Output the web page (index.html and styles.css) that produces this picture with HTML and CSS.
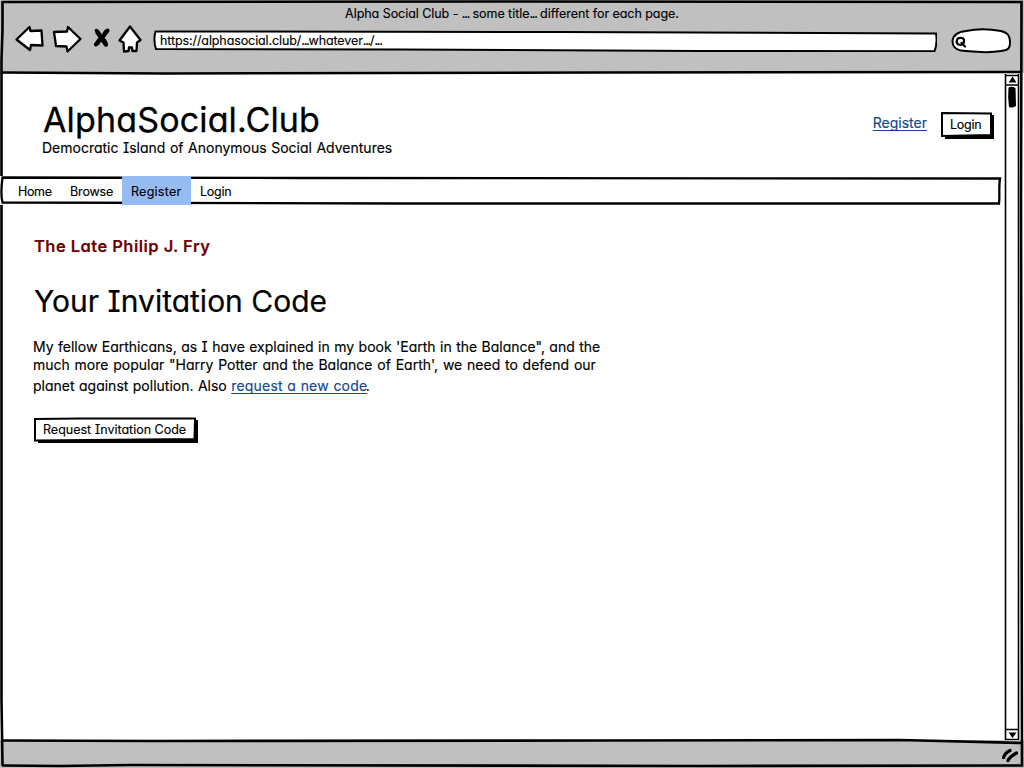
FILE: index.html
```html
<!DOCTYPE html>
<html lang="en">
<head>
<meta charset="utf-8">
<title>Alpha Social Club</title>
<link rel="stylesheet" href="styles.css">
</head>
<body>
<div class="window">
  <header class="chrome">
    <div class="window-title">Alpha Social Club - <span class="dots">...</span> some title<span class="dots">...</span> different for each page.</div>
    <div class="toolbar">
      <svg class="tools" width="130" height="34" viewBox="14 22 130 34">
        <g fill="#fff" stroke="#000" stroke-width="2.300" stroke-linejoin="round">
          <path d="M16.500 37.500 L29.500 25 L30.500 29 L41.500 28.500 L42.500 43.500 L31 43 L30 48 Z"/>
          <path d="M54 30 L67 29.500 L68 25 L80.500 37 L67.500 49.500 L66.500 44.500 L56 44 Z"/>
          <path d="M130 24.500 L140.500 38 L137 40.500 L136.500 49 L132.500 49 L132 45.500 L129 45.500 L128.500 49 L124 49.500 L123.500 40.500 L119.500 38.500 Z"/>
        </g>
        <path d="M94.500 28 Q96.500 25 99.500 29 L102 32.500 Q104 27 108 26.500 Q110.500 27.500 109 30 L104.500 36 Q108 39 108 43.500 Q106 46.500 103.500 43 L101 39.500 Q99 44.500 95 44.500 Q93 43 94.500 41 L98.500 35.500 Q95 32 94.500 28 Z"/>
      </svg>
      <div class="address">
        <svg class="outline" width="784" height="22" viewBox="153 30 784 22"><path d="M155.500 31.500 L560 32 L936 33.500 C937 39 936.500 46 934.500 51.200 L700 51 L400 49.500 L156 49 C154 44 154 36 155.500 31.500 Z" fill="#fff" stroke="#000" stroke-width="2"/></svg>
        <span class="t">https://alphasocial.club/<span class="dots">...</span>whatever<span class="dots">...</span>/<span class="dots">...</span></span>
      </div>
      <svg class="search" width="62" height="28" viewBox="950 27 62 28">
        <path d="M966 31 C977 28.500 991 29 1001 31 C1008 33 1010 36 1010 42 C1010 49 1008 50 1001 51 C990 53 976 52 966 51 C957 51 952.500 47 952.500 41 C953 35 957 32 966 31 Z" fill="#fff" stroke="#000" stroke-width="2"/>
        <path d="M957 40 C957.500 37.500 963.500 37 964 40 C964.500 44.500 961 45.500 958.500 44.500 C956.500 43.500 956.500 41.500 957 40 Z M961.500 43 L965 46.500" fill="none" stroke="#000" stroke-width="2.200" stroke-linecap="round"/>
      </svg>
    </div>
  </header>
  <div class="viewport">
    <main class="page">
      <div class="masthead">
        <div class="brand">
          <div class="logo">AlphaSocial.Club</div>
          <div class="tagline">Democratic Island of Anonymous Social Adventures</div>
        </div>
        <div class="account">
          <a class="link account-register">Register</a>
          <button class="button login">
            <svg class="outline" width="54" height="28" viewBox="940 111 54 28"><path d="M944 115 H994 V139 H945 V136 H944 Z"/><path d="M942 113 L991 113.500 L991 135 L942 136 Z" fill="#fff" stroke="#000" stroke-width="2"/></svg>
            <span class="t">Login</span>
          </button>
        </div>
      </div>
      <nav class="menu">
        <svg class="outline" width="1002" height="29" viewBox="0 176 1002 29"><path d="M2.500 177.500 L300 178 L1000 178.500 C998.500 187 1000 196 999 203.500 L400 203.500 L2.500 202.500 C0.500 195 1.500 185 2.500 177.500 Z" fill="#fff" stroke="#000" stroke-width="2.300"/></svg>
        <a class="item home">Home</a>
        <a class="item browse">Browse</a>
        <a class="item active">Register</a>
        <a class="item last">Login</a>
      </nav>
      <section class="content">
        <h2 class="eyebrow">The Late Philip J. Fry</h2>
        <h1 class="heading">Your Invitation Code</h1>
        <p class="copy">
          <span class="line one">My fellow Earthicans, as I have explained in my book 'Earth in the Balance", and the</span>
          <span class="line two">much more popular "Harry Potter and the Balance of Earth', we need to defend our</span>
          <span class="line three">planet against pollution. Also <a class="link">request a new code</a><span class="stop">.</span></span>
        </p>
        <button class="button request">
          <svg class="outline" width="166" height="28" viewBox="33 416 166 28"><path d="M38 420 H198 V443 H38 Z"/><path d="M35 419 L80 418.500 L195 418.500 L194.500 439 L35 440.500 Z" fill="#fff" stroke="#000" stroke-width="2"/></svg>
          <span class="t">Request Invitation Code</span>
        </button>
      </section>
    </main>
    <svg class="scrollbar" width="20" height="667" viewBox="1004 73 20 667">
      <path d="M1005.500 74 V740 M1018.500 74 V740 M1005 85 H1019 M1005 729.500 H1019 M1005 75.500 H1019 M1005 739.500 H1019" stroke="#000" stroke-width="1.600"/>
      <path d="M1008.500 82.500 L1012.500 76.500 L1016.500 82.500 Z M1008.500 732.500 H1016.500 L1012.500 738 Z"/>
      <path d="M1008.500 87.500 Q1012 86 1015.500 88 L1016 106 Q1012 108.500 1009 107 Q1007.500 97 1008.500 87.500 Z"/>
    </svg>
  </div>
  <footer class="status">
    <svg class="grip" width="18" height="16" viewBox="1002 747 18 16"><path d="M1003.500 757.500 Q1005 753 1010 750.500 M1008 760.500 Q1010 756.500 1016.500 753" fill="none" stroke="#000" stroke-width="3.200" stroke-linecap="round"/></svg>
  </footer>
  <svg class="frame" width="1024" height="768" viewBox="0 0 1024 768">
    <g fill="none" stroke="#000" stroke-width="2.600">
      <path d="M2.500 2 L500 1.500 L1021.500 2 L1021 200 L1022 765.500 L700 766 L130 765 L60 766 L2 765.500"/>
      <path d="M2.500 1 L2.500 30 L1.500 60 L1.500 176 M1.500 205 L1.500 310 L1.500 700 L2.500 766"/>
      <path d="M2 72.500 L165 73.500 L600 72.500 L1021 72"/>
      <path d="M2 740.500 L150 741 L600 740.500 L900 740 L1022 743"/>
    </g>
  </svg>
</div>
</body>
</html>
```
FILE: styles.css
```css
* { box-sizing: border-box; }
body {
  margin: 0;
  font-family: Inter, "Noto Sans", sans-serif;
  font-feature-settings: "cv11", "cv08", "calt" 0;
  font-size: 13px;
  color: #000;
  background: #fff;
  -webkit-text-stroke: 0.15px;
}
.window { position: relative; display: flex; flex-direction: column; width: 1024px; height: 768px; overflow: hidden; }
.frame { position: absolute; inset: 0; pointer-events: none; }
.chrome { height: 73px; background: #c0c0c0; }
.window-title { height: 26px; line-height: 27px; font-size: 12.500px; letter-spacing: -0.050px; text-align: center; white-space: pre; }
.dots { letter-spacing: -1.200px; }
.toolbar { display: flex; align-items: center; height: 30px; padding-left: 14px; }
.address { position: relative; width: 784px; height: 22px; margin-left: 9px; padding-left: 7px; line-height: 22px; font-size: 12.500px; letter-spacing: -0.100px; }
.search { margin-left: 13px; }
.outline { position: absolute; left: 0; top: 0; }
.t { position: relative; white-space: pre; }
.viewport { display: flex; height: 667px; }
.page { width: 1004px; }
.masthead { display: flex; justify-content: space-between; height: 103px; }
.brand { padding: 26px 0 0 42px; }
.logo { height: 40px; padding-left: 1px; line-height: 41px; font-size: 34px; letter-spacing: 0.150px; -webkit-text-stroke: 0.300px; }
.tagline { height: 18px; line-height: 18px; font-size: 14px; word-spacing: 0.600px; }
.account { display: flex; padding: 38px 10px 0 0; }
.link { color: #10488f; text-decoration: underline 1px; text-underline-offset: 2px; text-decoration-skip-ink: none; }
.account-register { height: 20px; margin: 2px 13px 0 0; line-height: 20px; font-size: 14px; }
.button { position: relative; border: 0; padding: 0; background: none; font: inherit; font-size: 12.500px; font-feature-settings: inherit; color: #000; text-align: left; }
.login { width: 54px; height: 28px; padding: 0 0 2px 10px; letter-spacing: -0.250px; }
.menu { position: relative; display: flex; height: 29px; padding: 0 0 0 18px; line-height: 31px; font-size: 12.500px; }
.item { position: relative; width: 52px; }
.home { letter-spacing: -0.350px; }
.browse { letter-spacing: -0.150px; }
.item.active { width: 69px; padding-left: 9px; background: #95bbf2; letter-spacing: 0.250px; }
.item.last { padding-left: 9px; letter-spacing: -0.250px; }
.content { padding: 29px 0 0 34px; }
.eyebrow { margin: 0; height: 24px; line-height: 24px; font-size: 16.500px; font-weight: 600; letter-spacing: 0.460px; color: #6f0000; }
.heading { margin: 23px 0 0; height: 40px; line-height: 40px; font-size: 30px; font-weight: 400; -webkit-text-stroke: 0.200px; }
.copy { margin: 17px 0 0 -1px; font-size: 14px; }
.line { display: block; height: 18px; line-height: 18px; white-space: nowrap; }
.one { word-spacing: 0.500px; }
.two { word-spacing: 0.850px; }
.three { margin-top: 3px; word-spacing: 0.500px; }
.three .link { letter-spacing: 0.200px; word-spacing: 0.400px; }
.stop { margin-left: -1.500px; }
.request { display: block; width: 166px; height: 28px; margin: 21px 0 0 -1px; padding: 0 0 2px 10px; }
.status { display: flex; justify-content: flex-end; height: 28px; padding: 7px 4px 0 0; background: #c0c0c0; }
```
